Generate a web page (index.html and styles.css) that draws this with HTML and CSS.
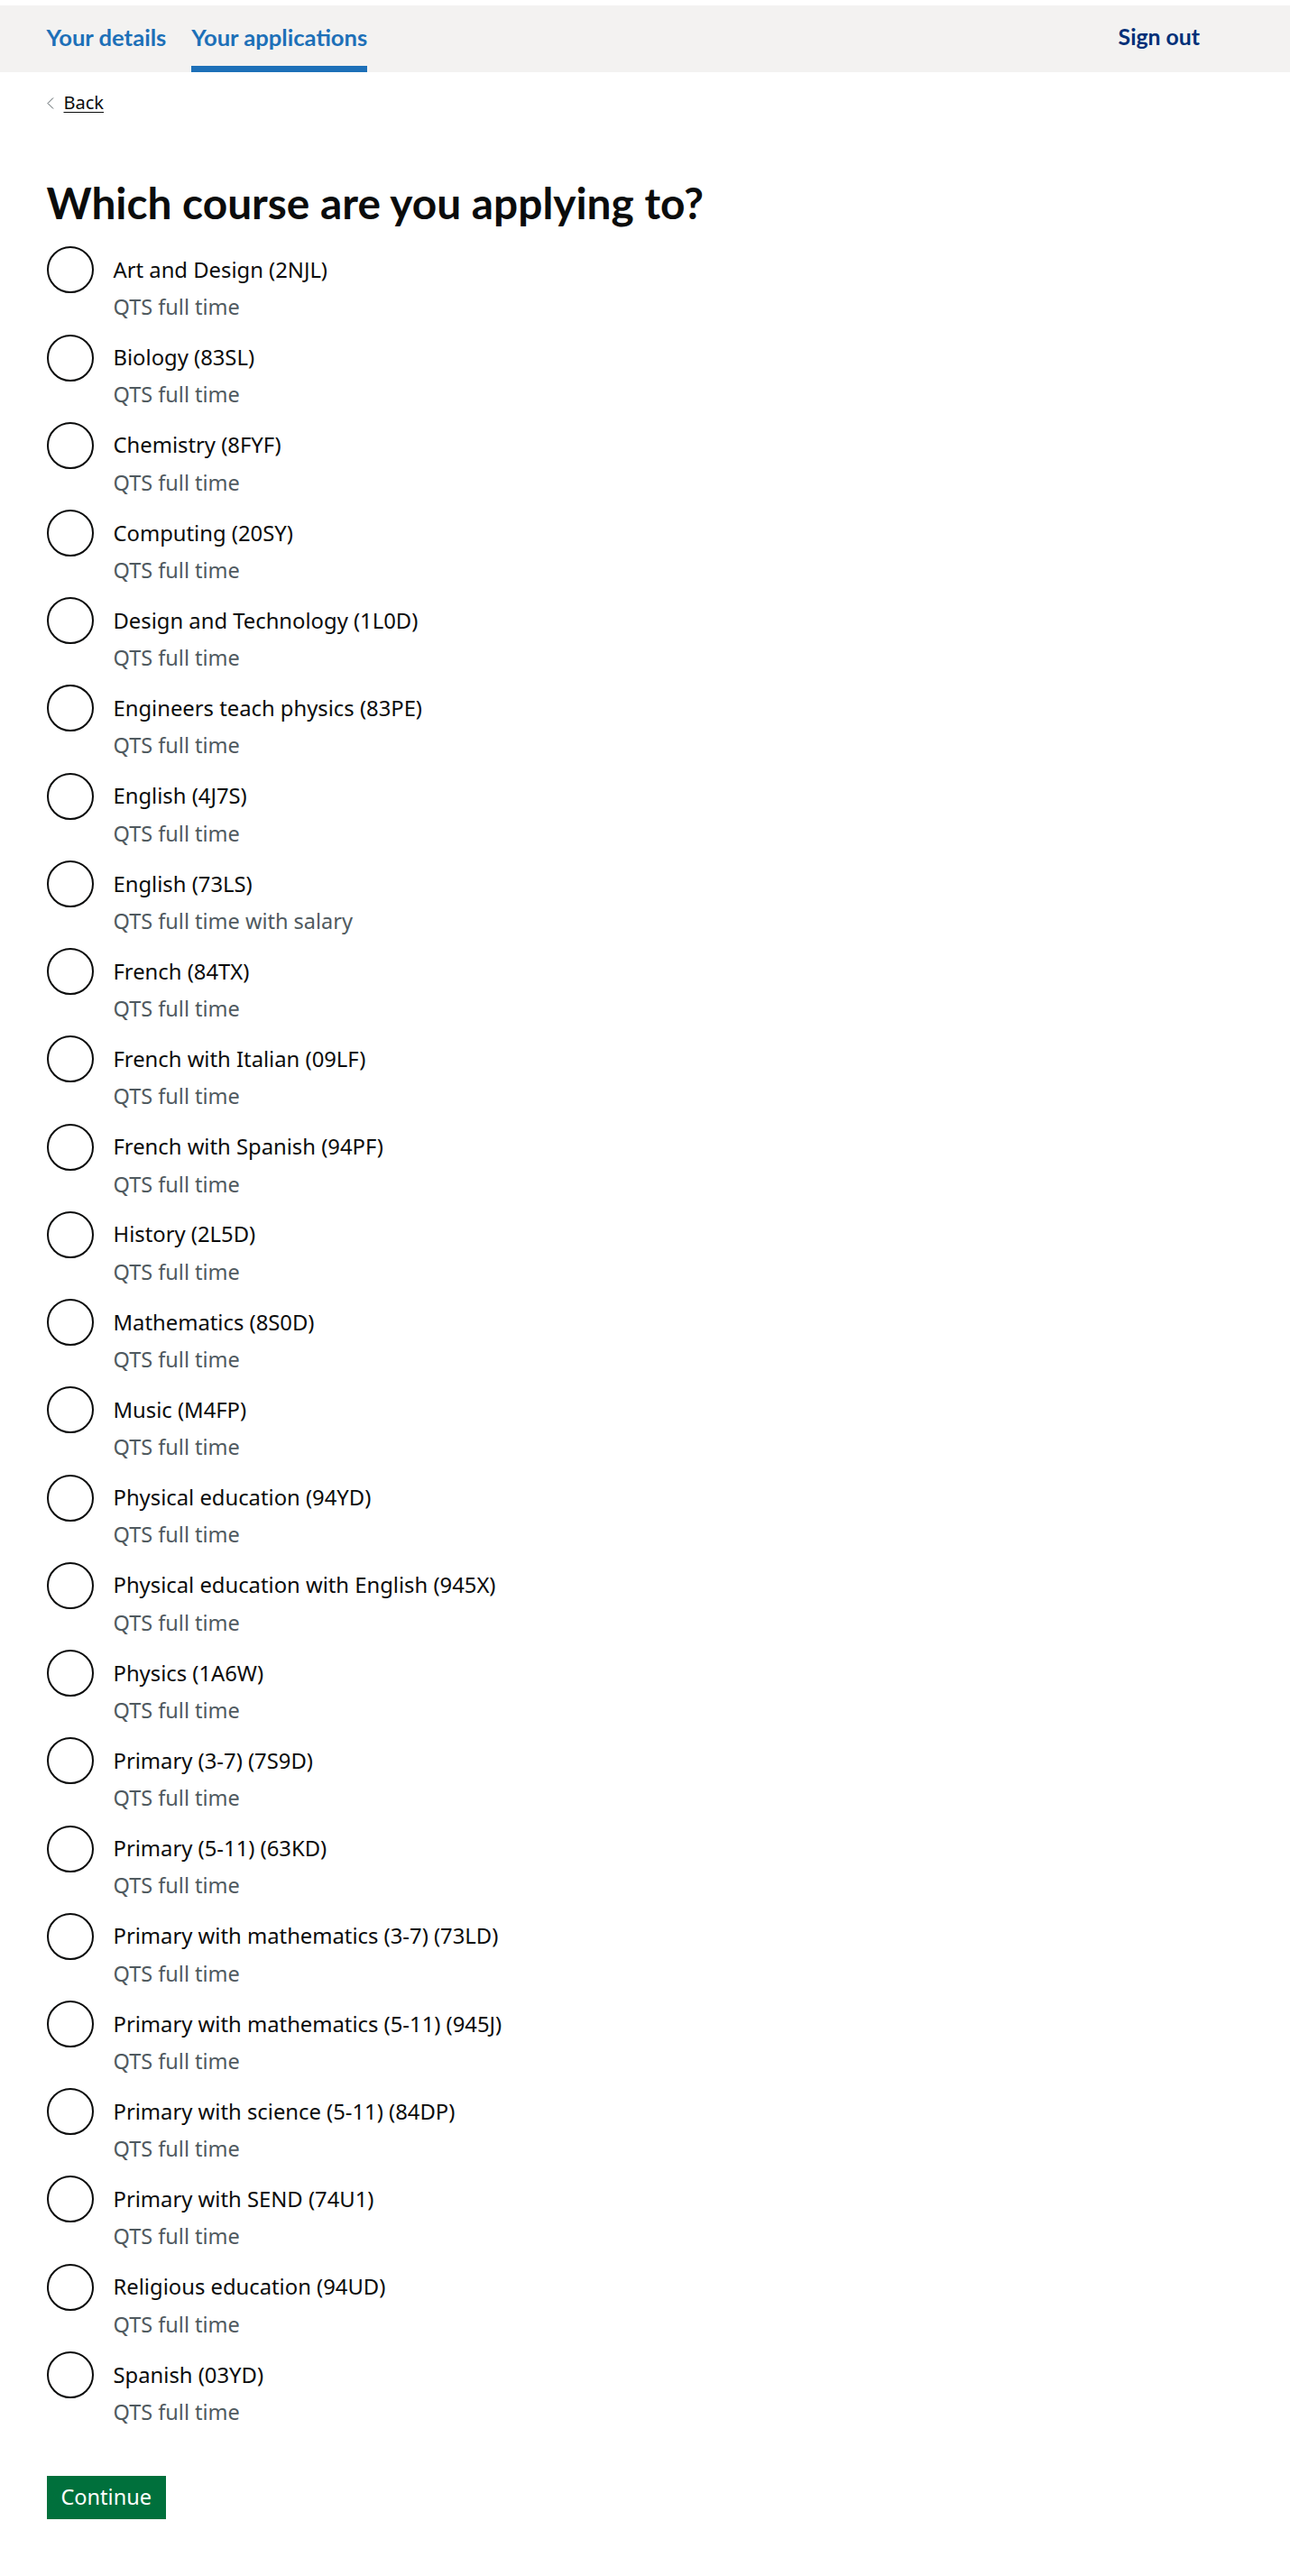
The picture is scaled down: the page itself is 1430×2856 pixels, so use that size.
FILE: index.html
```html
<!DOCTYPE html>
<html lang="en">
<head>
<meta charset="utf-8">
<title>Which course are you applying to?</title>
<link rel="stylesheet" href="styles.css">
</head>
<body>
<header class="header">
  <nav class="nav">
    <a class="nav-link" href="#">Your details</a>
    <a class="nav-link nav-link--active" href="#">Your applications</a>
  </nav>
  <a class="nav-link nav-link--signout" href="#">Sign out</a>
</header>
<main class="main">
  <a class="back" href="#"><svg class="back-icon" width="8" height="13" viewBox="0 0 8 13"><polyline points="7,0.5 1,6.5 7,12.5" fill="none" stroke="#505a5f" stroke-width="1"/></svg><span class="back-text">Back</span></a>
  <h1 class="heading">Which course are you applying to?</h1>
  <div class="radios">
    <label class="radio"><span class="radio-circle"></span><span class="radio-text"><span class="radio-label">Art and Design (2NJL)</span><span class="radio-hint">QTS full time</span></span></label>
    <label class="radio"><span class="radio-circle"></span><span class="radio-text"><span class="radio-label">Biology (83SL)</span><span class="radio-hint">QTS full time</span></span></label>
    <label class="radio"><span class="radio-circle"></span><span class="radio-text"><span class="radio-label">Chemistry (8FYF)</span><span class="radio-hint">QTS full time</span></span></label>
    <label class="radio"><span class="radio-circle"></span><span class="radio-text"><span class="radio-label">Computing (20SY)</span><span class="radio-hint">QTS full time</span></span></label>
    <label class="radio"><span class="radio-circle"></span><span class="radio-text"><span class="radio-label">Design and Technology (1L0D)</span><span class="radio-hint">QTS full time</span></span></label>
    <label class="radio"><span class="radio-circle"></span><span class="radio-text"><span class="radio-label">Engineers teach physics (83PE)</span><span class="radio-hint">QTS full time</span></span></label>
    <label class="radio"><span class="radio-circle"></span><span class="radio-text"><span class="radio-label">English (4J7S)</span><span class="radio-hint">QTS full time</span></span></label>
    <label class="radio"><span class="radio-circle"></span><span class="radio-text"><span class="radio-label">English (73LS)</span><span class="radio-hint">QTS full time with salary</span></span></label>
    <label class="radio"><span class="radio-circle"></span><span class="radio-text"><span class="radio-label">French (84TX)</span><span class="radio-hint">QTS full time</span></span></label>
    <label class="radio"><span class="radio-circle"></span><span class="radio-text"><span class="radio-label">French with Italian (09LF)</span><span class="radio-hint">QTS full time</span></span></label>
    <label class="radio"><span class="radio-circle"></span><span class="radio-text"><span class="radio-label">French with Spanish (94PF)</span><span class="radio-hint">QTS full time</span></span></label>
    <label class="radio"><span class="radio-circle"></span><span class="radio-text"><span class="radio-label">History (2L5D)</span><span class="radio-hint">QTS full time</span></span></label>
    <label class="radio"><span class="radio-circle"></span><span class="radio-text"><span class="radio-label">Mathematics (8S0D)</span><span class="radio-hint">QTS full time</span></span></label>
    <label class="radio"><span class="radio-circle"></span><span class="radio-text"><span class="radio-label">Music (M4FP)</span><span class="radio-hint">QTS full time</span></span></label>
    <label class="radio"><span class="radio-circle"></span><span class="radio-text"><span class="radio-label">Physical education (94YD)</span><span class="radio-hint">QTS full time</span></span></label>
    <label class="radio"><span class="radio-circle"></span><span class="radio-text"><span class="radio-label">Physical education with English (945X)</span><span class="radio-hint">QTS full time</span></span></label>
    <label class="radio"><span class="radio-circle"></span><span class="radio-text"><span class="radio-label">Physics (1A6W)</span><span class="radio-hint">QTS full time</span></span></label>
    <label class="radio"><span class="radio-circle"></span><span class="radio-text"><span class="radio-label">Primary (3-7) (7S9D)</span><span class="radio-hint">QTS full time</span></span></label>
    <label class="radio"><span class="radio-circle"></span><span class="radio-text"><span class="radio-label">Primary (5-11) (63KD)</span><span class="radio-hint">QTS full time</span></span></label>
    <label class="radio"><span class="radio-circle"></span><span class="radio-text"><span class="radio-label">Primary with mathematics (3-7) (73LD)</span><span class="radio-hint">QTS full time</span></span></label>
    <label class="radio"><span class="radio-circle"></span><span class="radio-text"><span class="radio-label">Primary with mathematics (5-11) (945J)</span><span class="radio-hint">QTS full time</span></span></label>
    <label class="radio"><span class="radio-circle"></span><span class="radio-text"><span class="radio-label">Primary with science (5-11) (84DP)</span><span class="radio-hint">QTS full time</span></span></label>
    <label class="radio"><span class="radio-circle"></span><span class="radio-text"><span class="radio-label">Primary with SEND (74U1)</span><span class="radio-hint">QTS full time</span></span></label>
    <label class="radio"><span class="radio-circle"></span><span class="radio-text"><span class="radio-label">Religious education (94UD)</span><span class="radio-hint">QTS full time</span></span></label>
    <label class="radio"><span class="radio-circle"></span><span class="radio-text"><span class="radio-label">Spanish (03YD)</span><span class="radio-hint">QTS full time</span></span></label>
  </div>
  <button class="button" type="button">Continue</button>
</main>
</body>
</html>
```
FILE: styles.css
```css
html, body {
  margin: 0;
  padding: 0;
  background: #ffffff;
}
body {
  font-family: "Noto Sans", "Liberation Sans", Arial, sans-serif;
  color: #0b0c0c;
}
.header {
  margin-top: 6px;
  height: 74px;
  background: #f3f2f1;
  display: flex;
  justify-content: space-between;
  padding: 0 100px 0 51.5px;
}
.nav {
  display: flex;
  gap: 28px;
}
.nav-link {
  display: block;
  box-sizing: border-box;
  height: 74px;
  padding-top: 20px;
  line-height: 30px;
  font-family: Lato, "Noto Sans", sans-serif;
  font-weight: 700;
  font-size: 25.6px;
  color: #1d70b8;
  text-decoration: none;
  border-bottom: 7px solid transparent;
}
.nav-link--active {
  border-bottom-color: #1d70b8;
}
.nav-link--signout {
  color: #003078;
  font-size: 24.8px;
}
.main {
  padding: 0 51.5px;
}
.back {
  display: inline-flex;
  align-items: center;
  margin-top: 20.7px;
  font-size: 20px;
  line-height: 25px;
  color: #0b0c0c;
  text-decoration: none;
}
.back-icon {
  margin-right: 11px;
  margin-top: 2px;
}
.back-text {
  text-decoration: underline;
  text-decoration-thickness: 1px;
  text-underline-offset: 3px;
}
.heading {
  margin: 71.3px 0 0;
  font-family: Lato, "Noto Sans", sans-serif;
  font-weight: 700;
  font-size: 47.8px;
  line-height: 56px;
  color: #0b0c0c;
}
.radios {
  margin-top: 20.3px;
  display: flex;
  flex-direction: column;
}
.radio {
  display: flex;
  align-items: flex-start;
  margin-bottom: 15.35px;
  cursor: pointer;
}
.radio-circle {
  flex: none;
  box-sizing: border-box;
  width: 52px;
  height: 52px;
  border: 2px solid #0b0c0c;
  border-radius: 50%;
  background: #ffffff;
}
.radio-text {
  display: flex;
  flex-direction: column;
  margin-left: 22px;
  padding-top: 10.6px;
}
.radio-label {
  font-size: 23.8px;
  line-height: 30px;
  color: #0b0c0c;
}
.radio-hint {
  margin-top: 11.3px;
  font-size: 23.5px;
  line-height: 30px;
  color: #505a5f;
}
.button {
  display: block;
  margin-top: 40.4px;
  box-sizing: border-box;
  height: 48px;
  padding: 8.6px 16px 9.4px;
  border: 0;
  border-radius: 0;
  background: #00703c;
  box-shadow: 0 4px 0 #002d18;
  color: #ffffff;
  font-family: "Noto Sans", "Liberation Sans", Arial, sans-serif;
  font-size: 23.5px;
  line-height: 30px;
  cursor: pointer;
}
```
